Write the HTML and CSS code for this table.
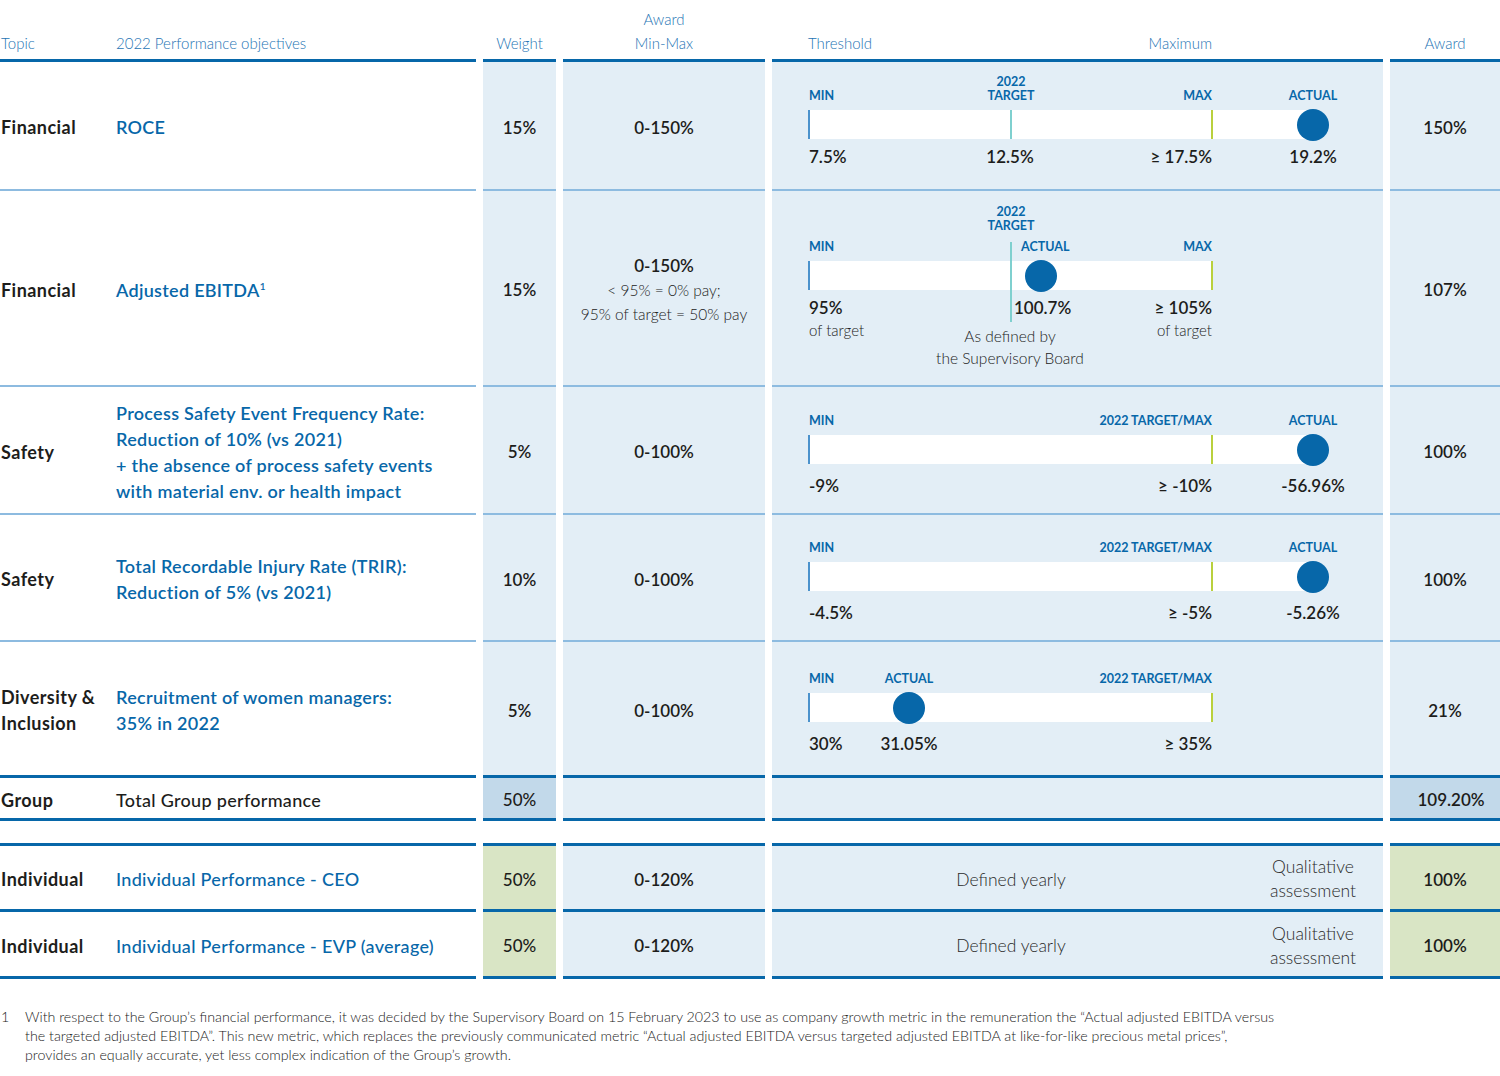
FILE: index.html
```html
<!DOCTYPE html>
<html lang="en">
<head>
<meta charset="utf-8">
<title>2022 Performance objectives</title>
<link rel="stylesheet" href="styles.css">
</head>
<body>
<div class="table">
  <div class="row head">
    <div class="cell hc"><span class="topic">Topic</span><span class="obj">2022 Performance objectives</span></div>
    <div class="cell hc center">Weight</div>
    <div class="cell hc center">Award<br>Min-Max</div>
    <div class="cell hc chart-head"><span>Threshold</span><span>Maximum</span></div>
    <div class="cell hc center">Award</div>
  </div>

  <div class="row r1">
    <div class="cell"><span class="topic">Financial</span><span class="obj">ROCE</span></div>
    <div class="cell bg num">15%</div>
    <div class="cell bg num">0-150%</div>
    <div class="cell bg chart-cell">
      <div class="chart">
        <span class="lbl" style="left:37px">MIN</span>
        <span class="lbl two c" style="left:239px">2022<br>TARGET</span>
        <span class="lbl r" style="left:440px">MAX</span>
        <span class="lbl c" style="left:541px">ACTUAL</span>
        <span class="bar" style="left:36px;width:505px"></span>
        <span class="mk mk-min" style="left:36px"></span>
        <span class="mk mk-tgt" style="left:238px"></span>
        <span class="mk mk-max" style="left:439px"></span>
        <span class="dot" style="left:541px"></span>
        <span class="val" style="left:37px">7.5%</span>
        <span class="val c" style="left:238px">12.5%</span>
        <span class="val r" style="left:440px">≥ 17.5%</span>
        <span class="val c" style="left:541px">19.2%</span>
      </div>
    </div>
    <div class="cell bg num">150%</div>
  </div>

  <div class="row r2">
    <div class="cell"><span class="topic">Financial</span><span class="obj">Adjusted EBITDA<sup>1</sup></span></div>
    <div class="cell bg num">15%</div>
    <div class="cell bg num stack"><span>0-150%</span><span class="note">&lt; 95% = 0% pay;</span><span class="note">95% of target = 50% pay</span></div>
    <div class="cell bg chart-cell">
      <div class="chart tall">
        <span class="lbl hi c" style="left:239px">2022<br>TARGET</span>
        <span class="lbl" style="left:37px">MIN</span>
        <span class="lbl" style="left:249px">ACTUAL</span>
        <span class="lbl r" style="left:440px">MAX</span>
        <span class="bar" style="left:36px;width:404px"></span>
        <span class="mk mk-min" style="left:36px"></span>
        <span class="tline" style="left:238px"></span>
        <span class="mk mk-max" style="left:439px"></span>
        <span class="dot" style="left:269px"></span>
        <span class="val" style="left:37px">95%</span>
        <span class="val" style="left:242px">100.7%</span>
        <span class="val r" style="left:440px">≥ 105%</span>
        <span class="sub" style="left:37px">of target</span>
        <span class="sub r" style="left:440px">of target</span>
        <span class="sub2 c" style="left:238px">As defined by<br>the Supervisory Board</span>
      </div>
    </div>
    <div class="cell bg num">107%</div>
  </div>

  <div class="row r3">
    <div class="cell"><span class="topic">Safety</span><span class="obj">Process Safety Event Frequency Rate:<br>Reduction of 10% (vs 2021)<br>+ the absence of process safety events<br>with material env. or health impact</span></div>
    <div class="cell bg num">5%</div>
    <div class="cell bg num">0-100%</div>
    <div class="cell bg chart-cell">
      <div class="chart low">
        <span class="lbl" style="left:37px">MIN</span>
        <span class="lbl r" style="left:440px">2022 TARGET/MAX</span>
        <span class="lbl c" style="left:541px">ACTUAL</span>
        <span class="bar" style="left:36px;width:505px"></span>
        <span class="mk mk-min" style="left:36px"></span>
        <span class="mk mk-max" style="left:439px"></span>
        <span class="dot" style="left:541px"></span>
        <span class="val" style="left:37px">-9%</span>
        <span class="val r" style="left:440px">≥ -10%</span>
        <span class="val c" style="left:541px">-56.96%</span>
      </div>
    </div>
    <div class="cell bg num">100%</div>
  </div>

  <div class="row r4">
    <div class="cell"><span class="topic">Safety</span><span class="obj">Total Recordable Injury Rate (TRIR):<br>Reduction of 5% (vs 2021)</span></div>
    <div class="cell bg num">10%</div>
    <div class="cell bg num">0-100%</div>
    <div class="cell bg chart-cell">
      <div class="chart low">
        <span class="lbl" style="left:37px">MIN</span>
        <span class="lbl r" style="left:440px">2022 TARGET/MAX</span>
        <span class="lbl c" style="left:541px">ACTUAL</span>
        <span class="bar" style="left:36px;width:505px"></span>
        <span class="mk mk-min" style="left:36px"></span>
        <span class="mk mk-max" style="left:439px"></span>
        <span class="dot" style="left:541px"></span>
        <span class="val" style="left:37px">-4.5%</span>
        <span class="val r" style="left:440px">≥ -5%</span>
        <span class="val c" style="left:541px">-5.26%</span>
      </div>
    </div>
    <div class="cell bg num">100%</div>
  </div>

  <div class="row r5">
    <div class="cell thick"><span class="topic">Diversity &amp;<br>Inclusion</span><span class="obj">Recruitment of women managers:<br>35% in 2022</span></div>
    <div class="cell bg num thick">5%</div>
    <div class="cell bg num thick">0-100%</div>
    <div class="cell bg chart-cell thick">
      <div class="chart low">
        <span class="lbl" style="left:37px">MIN</span>
        <span class="lbl c" style="left:137px">ACTUAL</span>
        <span class="lbl r" style="left:440px">2022 TARGET/MAX</span>
        <span class="bar" style="left:36px;width:404px"></span>
        <span class="mk mk-min" style="left:36px"></span>
        <span class="mk mk-max" style="left:439px"></span>
        <span class="dot" style="left:137px"></span>
        <span class="val" style="left:37px">30%</span>
        <span class="val c" style="left:137px">31.05%</span>
        <span class="val r" style="left:440px">≥ 35%</span>
      </div>
    </div>
    <div class="cell bg num thick">21%</div>
  </div>

  <div class="row group">
    <div class="cell thick"><span class="topic">Group</span><span class="obj dark">Total Group performance</span></div>
    <div class="cell bg-strong num reg thick">50%</div>
    <div class="cell bg thick"></div>
    <div class="cell bg thick"></div>
    <div class="cell bg-strong num thick total">109.20%</div>
  </div>

  <div class="spacer"></div>

  <div class="row ind first">
    <div class="cell thick"><span class="topic">Individual</span><span class="obj reg">Individual Performance - CEO</span></div>
    <div class="cell bg-green num reg thick">50%</div>
    <div class="cell bg num thick">0-120%</div>
    <div class="cell bg thick qual"><span class="defined">Defined yearly</span><span class="assess">Qualitative<br>assessment</span></div>
    <div class="cell bg-green num thick">100%</div>
  </div>

  <div class="row ind">
    <div class="cell thick"><span class="topic">Individual</span><span class="obj reg">Individual Performance - EVP (average)</span></div>
    <div class="cell bg-green num reg thick">50%</div>
    <div class="cell bg num thick">0-120%</div>
    <div class="cell bg thick qual"><span class="defined">Defined yearly</span><span class="assess">Qualitative<br>assessment</span></div>
    <div class="cell bg-green num thick">100%</div>
  </div>
</div>

<div class="footnote">
  <span class="fn-num">1</span>
  <p class="fn-text">With respect to the Group’s financial performance, it was decided by the Supervisory Board on 15 February 2023 to use as company growth metric in the remuneration the “Actual adjusted EBITDA versus<br>the targeted adjusted EBITDA”. This new metric, which replaces the previously communicated metric “Actual adjusted EBITDA versus targeted adjusted EBITDA at like-for-like precious metal prices”,<br>provides an equally accurate, yet less complex indication of the Group’s growth.</p>
</div>
</body>
</html>
```

FILE: styles.css
```css
* { box-sizing: border-box; }

body {
  margin: 0;
  background: #ffffff;
  font-family: Lato, "Open Sans", "Liberation Sans", sans-serif;
  color: #222222;
}

.table {
  width: 1500px;
}

.row {
  display: grid;
  grid-template-columns: 476px 73px 202px 611px 110px;
  column-gap: 7px;
}

.cell {
  display: flex;
  align-items: center;
  border-bottom: 2px solid #8dbbe0;
  padding-top: 3px;
  min-width: 0;
}

.cell.thick { border-bottom: 3px solid #0767a9; }

.bg { background: #e3eef6; }
.bg-strong { background: #c2d9ea; }
.bg-green { background: #d9e5c5; }

/* header */
.head { height: 62px; }
.head .cell {
  align-items: flex-end;
  border-bottom: 3px solid #0767a9;
  padding-top: 0;
  padding-bottom: 4px;
  font-size: 15px;
  font-weight: 300;
  line-height: 24px;
  color: #2574b4;
}
.center { justify-content: center; text-align: center; }
.chart-head {
  justify-content: space-between;
  padding-left: 36px;
  padding-right: 171px;
}

.r1 { height: 129px; }
.r2 { height: 196px; }
.r3 { height: 128px; }
.r4 { height: 127px; }
.r5 { height: 136px; }
.group { height: 43px; }
.spacer { height: 22px; }
.ind { height: 67px; }
.ind.first { height: 69px; }
.ind.first .cell { border-top: 3px solid #0767a9; }

/* topic / objective */
.topic {
  flex: 0 0 116px;
  padding-left: 1px;
  font-size: 18px;
  font-weight: 700;
  letter-spacing: 0.45px;
  line-height: 26px;
  color: #1d1d1b;
}
.obj {
  flex: 1;
  font-size: 18px;
  font-weight: 600;
  letter-spacing: 0.3px;
  line-height: 26px;
  color: #0767a9;
}
.head .topic, .head .obj {
  font-size: 15px;
  font-weight: 300;
  letter-spacing: 0;
  color: #2574b4;
  line-height: 24px;
}
.obj.dark { color: #1d1d1b; font-weight: 500; }
.obj.reg { font-weight: 500; }
.obj sup { font-size: 10px; line-height: 0; vertical-align: 7px; }

/* numbers */
.num {
  justify-content: center;
  text-align: center;
  font-size: 17px;
  font-weight: 600;
  color: #1d1d1b;
}
.num.reg { font-weight: 500; }
.total { padding-left: 12px; }
.stack {
  flex-direction: column;
  justify-content: center;
  line-height: 24px;
}
.note {
  font-size: 15.5px;
  font-weight: 300;
  color: #222222;
}

/* chart */
.chart-cell { padding-top: 6px; }
.chart {
  position: relative;
  width: 100%;
  height: 79px;
}
.chart.tall { height: 102px; }

.lbl, .val, .sub, .sub2, .bar, .mk, .dot, .tline { position: absolute; }

.lbl {
  top: 0;
  font-size: 12.5px;
  font-weight: 700;
  line-height: 14px;
  color: #0767a9;
  white-space: nowrap;
  text-align: center;
}
.lbl.two { top: -14px; }
.lbl.hi { top: -35px; }

.c { transform: translateX(-50%); }
.r { transform: translateX(-100%); }

.bar {
  top: 21px;
  height: 29px;
  background: #ffffff;
}
.mk {
  top: 21px;
  height: 29px;
  width: 2px;
}
.mk-min { background: #4b92cc; }
.mk-tgt { background: #7fd0cf; }
.mk-max { background: #b9d03d; }
.tline {
  top: 2px;
  height: 80px;
  width: 2px;
  background: #7fd0cf;
}
.dot {
  top: 20px;
  width: 32px;
  height: 32px;
  margin-left: -16px;
  border-radius: 50%;
  background: #0767a9;
}

.val {
  top: 57px;
  font-size: 17px;
  font-weight: 600;
  line-height: 22px;
  white-space: nowrap;
  color: #1d1d1b;
}
.chart.low .val { top: 61px; }
.sub {
  top: 79px;
  font-size: 15px;
  font-weight: 300;
  line-height: 22px;
  white-space: nowrap;
  color: #222222;
}
.sub2 {
  top: 85px;
  font-size: 15.5px;
  font-weight: 300;
  line-height: 22px;
  white-space: nowrap;
  text-align: center;
  color: #222222;
}

/* individual qualitative */
.qual { justify-content: flex-start; }
.defined {
  width: 478px;
  text-align: center;
  font-size: 17.5px;
  font-weight: 300;
  color: #2a2a2a;
}
.assess {
  width: 126px;
  text-align: center;
  font-size: 17.5px;
  font-weight: 300;
  line-height: 24px;
  color: #2a2a2a;
}

/* footnote */
.footnote {
  display: flex;
  margin-top: 28px;
  font-size: 14.25px;
  font-weight: 300;
  line-height: 19px;
  color: #222222;
}
.fn-num {
  flex: 0 0 25px;
  padding-left: 1px;
}
.fn-text {
  margin: 0;
  white-space: nowrap;
}
```
